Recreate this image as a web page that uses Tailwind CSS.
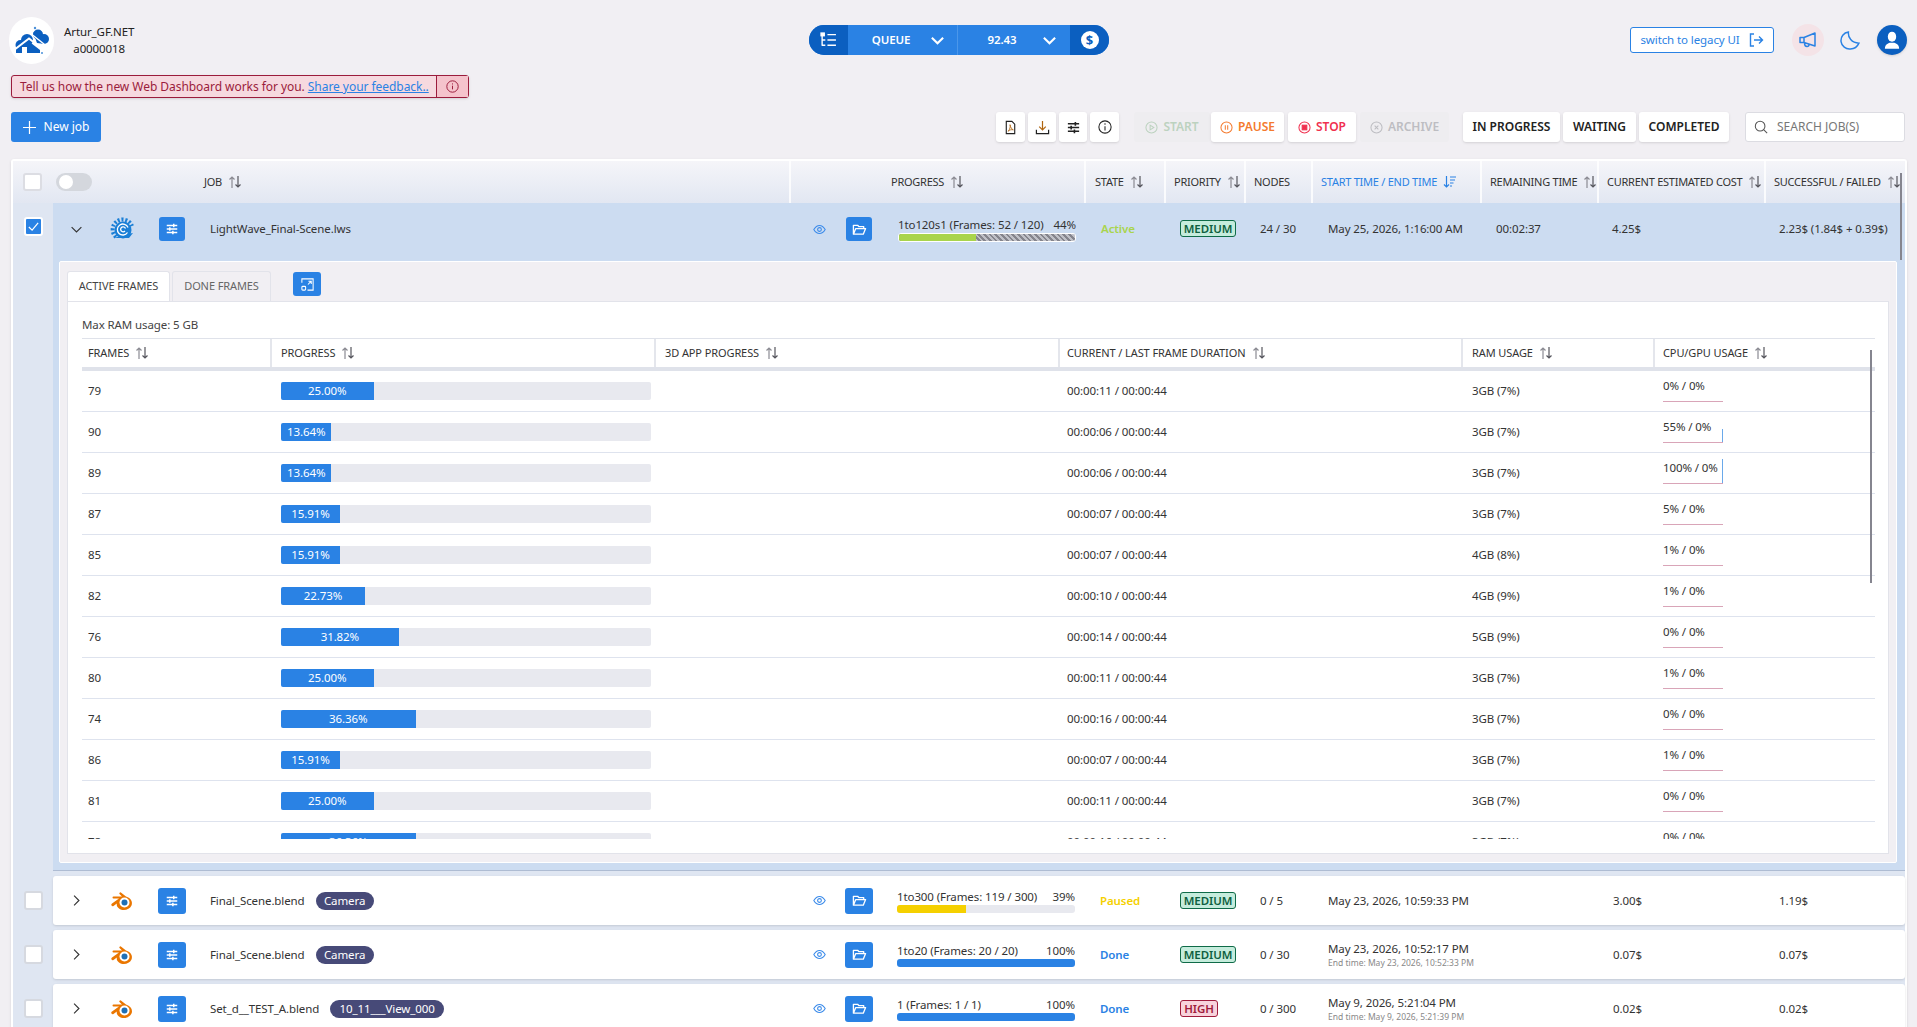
<!DOCTYPE html>
<html lang="en">
<head>
  <meta charset="UTF-8" />
  <title>Web Dashboard</title>
  <script src="https://cdn.jsdelivr.net/npm/@tailwindcss/browser@4"></script>
</head>
<body class="bg-[#f1eff3] font-['Noto_Sans',sans-serif] text-[11.5px] tracking-[-0.1px] text-[#333] h-[1027px] overflow-hidden">
  <!-- shared icons -->
  <svg class="absolute w-0 h-0">
    <symbol id="sort" viewBox="0 0 14 14"><path d="M4 13V2M1.500 4.500 4 2l2.500 2.500" fill="none" stroke="#8b8b93" stroke-width="1.200"/><path d="M10 1v11M7.500 9.500 10 12l2.500-2.500" fill="none" stroke="#55555d" stroke-width="1.200"/></symbol>
    <symbol id="sliders" viewBox="0 0 16 16"><path d="M2 4h12M2 8h12M2 12h12" stroke="currentColor" stroke-width="1.500" fill="none"/><path d="M10 2v4M5.500 6v4M9 10v4" stroke="currentColor" stroke-width="1.700" fill="none"/></symbol>
    <symbol id="folder" viewBox="0 0 16 16"><path d="M1.500 13V3.500h4.500l1.500 1.500h5V7M1.500 13h10.500l2.500-6H4z" fill="none" stroke="currentColor" stroke-width="1.400" stroke-linejoin="round"/></symbol>
    <symbol id="eye" viewBox="0 0 16 16"><path d="M1 8c2-3.400 4.400-5 7-5s5 1.600 7 5c-2 3.400-4.400 5-7 5s-5-1.600-7-5z" fill="none" stroke="currentColor" stroke-width="1.300"/><circle cx="8" cy="8" r="2.300" fill="none" stroke="currentColor" stroke-width="1.300"/></symbol>
    <symbol id="blender" viewBox="0 0 24 24"><path fill="#ea7600" d="M2 14.500 9 9.500H3.500a1 1 0 0 1 0-2H12L9.500 5a1 1 0 0 1 1.400-1.400L16 7.500c5 1.500 7 5.500 5.500 9-2 4.500-8.500 6-12.500 3-2-1.500-2.500-3-2.200-5L3.500 17A1 1 0 0 1 2 14.500z"/><circle cx="14.500" cy="13.500" r="5" fill="#fff"/><circle cx="14.500" cy="13.500" r="3" fill="#1f6fb5"/></symbol>
  </svg>

  <header class="h-[75px] pt-[5px] flex items-center">
    <div class="w-[809px] flex items-center pl-[9px]">
      <div class="w-[45px] h-[47px] rounded-full bg-white">
        <svg viewBox="0 0 45 47" class="w-[45px] h-[47px]" fill="#0b5fc0">
          <circle cx="11.500" cy="28" r="5"/><circle cx="18" cy="23" r="6"/><rect x="7" y="27" width="16" height="9"/>
          <circle cx="29" cy="17.500" r="5"/><circle cx="35" cy="22" r="5"/><path d="M24 15l12 12-8-1z"/>
          <path d="M5 33 20 21.500 36 34" fill="none" stroke="#fff" stroke-width="2"/>
          <path d="M20 24.500 31 33v3H20z"/>
          <path d="M18.500 14 40 31" stroke="#fff" stroke-width="1.500" fill="none"/>
          <rect x="13" y="30" width="5" height="6" fill="#fff"/>
          <circle cx="26" cy="11" r="1.200" fill="#4a90d9"/><circle cx="33" cy="36" r="1" fill="#4a90d9"/>
        </svg>
      </div>
      <div class="ml-[10px] text-center leading-[17px] text-[#222]">
        <div>Artur_GF.NET</div>
        <div>a0000018</div>
      </div>
    </div>

    <div class="w-[300px] h-[30px] rounded-full overflow-hidden flex bg-[#2a82e4] text-white font-semibold">
      <div class="w-[39px] bg-[#0b5fc0] flex items-center justify-center">
        <svg viewBox="0 0 16 16" class="w-[17px] h-[17px]" fill="none" stroke="#fff" stroke-width="1.300"><path d="M2 2v11M2 7.500h3M2 12.500h3M7 2.500h8M7 7.500h8M7 12.500h8"/><rect x="1" y="1" width="3" height="2.500" fill="#fff"/></svg>
      </div>
      <div class="w-[110px] flex items-center border-r border-[#4b97ea]">
        <span class="ml-[18px] w-[50px] text-center">QUEUE</span>
        <svg viewBox="0 0 16 16" class="ml-[14px] w-[15px] h-[15px]" fill="none" stroke="#fff" stroke-width="2.200"><path d="M2 5l6 6 6-6"/></svg>
      </div>
      <div class="w-[112px] flex items-center">
        <span class="ml-[21px] w-[46px] text-center">92.43</span>
        <svg viewBox="0 0 16 16" class="ml-[17px] w-[15px] h-[15px]" fill="none" stroke="#fff" stroke-width="2.200"><path d="M2 5l6 6 6-6"/></svg>
      </div>
      <div class="w-[39px] bg-[#0b5fc0] flex items-center justify-center">
        <span class="w-[18px] h-[18px] rounded-full bg-white text-[#0b5fc0] font-bold text-[13px] leading-[18px] text-center">$</span>
      </div>
    </div>

    <div class="flex-1 flex items-center justify-end pr-[10px]">
      <a class="w-[144px] h-[26px] rounded-[3px] border border-[#2a82e4] bg-white text-[#2a82e4] flex items-center justify-center gap-[8px]">
        <span>switch to legacy UI</span>
        <svg viewBox="0 0 16 16" class="w-[16px] h-[16px]" fill="none" stroke="#2a82e4" stroke-width="1.400"><path d="M6 2H2.500v12H6M6 8h8.500M11 4.500 14.500 8 11 11.500"/></svg>
      </a>
      <div class="ml-[18px] w-[32px] h-[32px] rounded-full bg-[#f4e3e7] flex items-center justify-center">
        <svg viewBox="0 0 20 20" class="w-[20px] h-[20px]" fill="none" stroke="#2a82e4" stroke-width="1.500" stroke-linejoin="round"><path d="M2 7.500h4L17 3v13L6 12.500H2zM6 7.500v5M6.500 13c0 2 1 3.500 2.500 3.500s2-1 2-2"/></svg>
      </div>
      <svg viewBox="0 0 20 20" class="ml-[16px] w-[21px] h-[21px]" fill="none" stroke="#2a82e4" stroke-width="1.400"><path d="M8 2c-.5 5 3 10.500 10 10.500-1.500 3.500-4.500 5.500-8 5.500a8 8 0 0 1-2-16z"/></svg>
      <div class="ml-[16px] w-[30px] h-[30px] rounded-full bg-[#0b5fc0] overflow-hidden shadow flex items-center justify-center">
        <svg viewBox="0 0 20 20" class="w-[22px] h-[22px]" fill="#fff"><ellipse cx="10" cy="7" rx="3.800" ry="4.600"/><path d="M3.500 18c0-3.500 2.500-5 4.500-5.500h4c2 .5 4.500 2 4.500 5.500z"/></svg>
      </div>
    </div>
  </header>

  <div class="ml-[11px] w-[458px] h-[23px] flex rounded-[3px] border border-[#9b1c3c] bg-[#f6d9df] shadow text-[#9b1c3c] text-[12px] tracking-[-0.05px] leading-[21px]">
    <div class="w-[424px] pl-[8px] whitespace-nowrap">Tell us how the new Web Dashboard works for you. <a class="text-[#2a82e4] underline">Share your feedback..</a></div>
    <div class="flex-1 border-l border-[#9b1c3c] bg-[#f5c3cc] flex items-center justify-center">
      <svg viewBox="0 0 16 16" class="w-[13px] h-[13px]" fill="none" stroke="#9b1c3c" stroke-width="1.200"><circle cx="8" cy="8" r="7"/><path d="M8 7v4.500M8 4.200v1.300"/></svg>
    </div>
  </div>

  <div class="mt-[14px] px-[11px] pr-[12px] h-[30px] flex items-stretch text-[12px] tracking-normal">
    <button class="w-[90px] rounded-[3px] bg-[#2a82e4] text-white flex items-center justify-center gap-[8px]">
      <svg viewBox="0 0 14 14" class="w-[13px] h-[13px]" fill="none" stroke="#fff" stroke-width="1.300"><path d="M7 0v14M0 7h14"/></svg>
      New job
    </button>
    <div class="ml-[895px] flex gap-[3px]">
      <button class="w-[29px] rounded-[3px] bg-white shadow flex items-center justify-center">
        <svg viewBox="0 0 16 16" class="w-[15px] h-[15px]" fill="none" stroke="#222" stroke-width="1.200"><path d="M3.500 1.500h6l3 3v10h-9z"/><path d="M5.500 12c2-2 2.500-5 2-7 .5 3 2 5 3.500 5.500-2-.5-4 0-5.500 1.500z" stroke="#b0650f" stroke-width=".9"/></svg>
      </button>
      <button class="w-[28px] rounded-[3px] bg-white shadow flex items-center justify-center">
        <svg viewBox="0 0 16 16" class="w-[15px] h-[15px]" fill="none" stroke="#222" stroke-width="1.300"><path d="M8 1v9M4.500 7 8 10.500 11.500 7" stroke="#b0650f"/><path d="M1.500 10.500v4h13v-4"/></svg>
      </button>
      <button class="w-[28px] rounded-[3px] bg-white shadow flex items-center justify-center text-[#222]">
        <svg class="w-[15px] h-[15px]"><use href="#sliders"/></svg>
      </button>
      <button class="w-[29px] rounded-[3px] bg-white shadow flex items-center justify-center">
        <svg viewBox="0 0 16 16" class="w-[14px] h-[14px]" fill="none" stroke="#222" stroke-width="1.200"><circle cx="8" cy="8" r="7"/><path d="M8 7v5M8 3.800v1.500"/></svg>
      </button>
    </div>
    <div class="ml-[15px] flex font-semibold">
      <button class="w-[76px] rounded-[3px] bg-[#eeedf0] text-[#bcd2bf] flex items-center justify-center gap-[5px]">
        <svg viewBox="0 0 14 14" class="w-[13px] h-[13px]" fill="none" stroke="#bcd2bf" stroke-width="1.100"><circle cx="7" cy="7" r="6"/><path d="M5.500 4.500v5l4-2.500z"/></svg>START
      </button>
      <button class="ml-[1px] w-[73px] rounded-[3px] bg-white shadow text-[#f47a2e] flex items-center justify-center gap-[5px]">
        <svg viewBox="0 0 14 14" class="w-[13px] h-[13px]" fill="none" stroke="#f47a2e" stroke-width="1.100"><circle cx="7" cy="7" r="6"/><path d="M5.700 4.500v5M8.300 4.500v5"/></svg>PAUSE
      </button>
      <button class="ml-[4px] w-[68px] rounded-[3px] bg-white shadow text-[#f0304f] flex items-center justify-center gap-[5px]">
        <svg viewBox="0 0 14 14" class="w-[13px] h-[13px]" fill="none" stroke="#f0304f" stroke-width="1.100"><circle cx="7" cy="7" r="6"/><rect x="4.500" y="4.500" width="5" height="5" fill="#f0304f"/></svg>STOP
      </button>
      <button class="ml-[4px] w-[89px] rounded-[3px] bg-[#eeedf0] text-[#bdbdc2] flex items-center justify-center gap-[5px]">
        <svg viewBox="0 0 14 14" class="w-[13px] h-[13px]" fill="none" stroke="#bdbdc2" stroke-width="1.100"><circle cx="7" cy="7" r="6"/><path d="M5 5l4 4M9 5 5 9"/></svg>ARCHIVE
      </button>
    </div>
    <div class="ml-[14px] flex gap-[3px] font-semibold text-[#222]">
      <button class="w-[97px] rounded-[3px] bg-white shadow">IN PROGRESS</button>
      <button class="w-[73px] rounded-[3px] bg-white shadow">WAITING</button>
      <button class="w-[90px] rounded-[3px] bg-white shadow">COMPLETED</button>
    </div>
    <div class="ml-[16px] w-[160px] rounded-[3px] border border-[#dcdce2] bg-white flex items-center pl-[8px] gap-[9px] text-[#777]">
      <svg viewBox="0 0 16 16" class="w-[14px] h-[14px]" fill="none" stroke="#555" stroke-width="1.200"><circle cx="7" cy="7" r="5.500"/><path d="M11 11l4 4"/></svg>
      SEARCH JOB(S)
    </div>
  </div>

  <main class="mt-[17px] ml-[11px] w-[1896px] rounded-t-[3px] border-x-2 border-t-2 border-white bg-[#dfe6f2] shadow">
    <!-- table head -->
    <div class="flex h-[42px] bg-gradient-to-b from-[#f5f5f9] to-[#e2e7f2] text-[#333] uppercase text-[11px] tracking-[-0.25px]">
      <div class="w-[40px] shrink-0 flex items-center pl-[10px]"><span class="w-[19px] h-[18px] rounded-[3px] bg-white border-2 border-[#dcdde3]"></span></div>
      <div class="grid grid-cols-[736px_295px_80px_80px_67px_169px_117px_167px_141px] flex-1">
        <div class="flex items-center pl-[3px]">
          <span class="w-[36px] h-[18px] rounded-full bg-[#d4d7dd] flex items-center pl-[3px]"><span class="w-[14px] h-[14px] rounded-full bg-white"></span></span>
          <span class="ml-[112px]">Job</span><svg class="ml-[6px] w-[14px] h-[14px] shrink-0"><use href="#sort"/></svg>
        </div>
        <div class="border-l-2 border-white/80 flex items-center pl-[100px]">Progress<svg class="ml-[6px] w-[14px] h-[14px] shrink-0"><use href="#sort"/></svg></div>
        <div class="border-l-2 border-white/80 flex items-center pl-[9px]">State<svg class="ml-[6px] w-[14px] h-[14px] shrink-0"><use href="#sort"/></svg></div>
        <div class="border-l-2 border-white/80 flex items-center pl-[8px]">Priority<svg class="ml-[6px] w-[14px] h-[14px] shrink-0"><use href="#sort"/></svg></div>
        <div class="border-l-2 border-white/80 flex items-center pl-[8px]">Nodes</div>
        <div class="border-l-2 border-white/80 flex items-center pl-[8px] text-[#2a82e4]">Start time / End time
          <svg viewBox="0 0 14 14" class="ml-[6px] w-[14px] h-[14px] shrink-0" fill="none" stroke="#2a82e4" stroke-width="1.200"><path d="M3.500 1v11M1 9.500 3.500 12 6 9.500M7 2h6M7 5h5M7 8h3.500M7 11h2"/></svg>
        </div>
        <div class="border-l-2 border-white/80 flex items-center pl-[8px] whitespace-nowrap">Remaining time<svg class="ml-[6px] w-[14px] h-[14px] shrink-0"><use href="#sort"/></svg></div>
        <div class="border-l-2 border-white/80 flex items-center pl-[8px] whitespace-nowrap">Current estimated cost<svg class="ml-[6px] w-[14px] h-[14px] shrink-0"><use href="#sort"/></svg></div>
        <div class="border-l-2 border-white/80 flex items-center pl-[8px] whitespace-nowrap">Successful / Failed<svg class="ml-[6px] w-[14px] h-[14px] shrink-0"><use href="#sort"/></svg></div>
      </div>
    </div>

    <!-- expanded job -->
    <div class="flex">
      <div class="w-[40px] shrink-0 pt-[14px] pl-[11px]">
        <span class="w-[19px] h-[19px] rounded-[3px] border-2 border-white bg-[#2a82e4] flex items-center justify-center">
          <svg viewBox="0 0 14 14" class="w-[13px] h-[13px]" fill="none" stroke="#fff" stroke-width="1.300"><path d="M2 7.500 5.500 11 12 3"/></svg>
        </span>
      </div>
      <div class="flex-1 bg-[#ccdcf1] border-b border-[#aebcd3] h-[668px]">
        <div class="grid grid-cols-[736px_295px_80px_80px_67px_169px_117px_167px_141px] h-[58px] pb-[6px] items-center">
          <div class="flex items-center">
            <svg viewBox="0 0 16 16" class="ml-[17px] w-[13px] h-[13px]" fill="none" stroke="#333" stroke-width="1.400"><path d="M2 5l6 6 6-6"/></svg>
            <svg viewBox="0 0 24 24" class="ml-[27px] w-[24px] h-[24px]">
              <path d="M6 20A10 10 0 1 1 22 9" fill="none" stroke="#1a7fd6" stroke-width="4" stroke-dasharray="2 1.800"/>
              <circle cx="13" cy="13" r="8.500" fill="#1a7fd6"/>
              <path d="M4 21h15l4-5-6 1z" fill="#1a7fd6"/>
              <path d="M17.500 15.500a5.500 5.500 0 1 1 .5-5M15 14a2.500 2.500 0 1 1 .5-2.500" fill="none" stroke="#fff" stroke-width="1.300"/>
            </svg>
            <span class="ml-[25px] w-[26px] h-[24px] rounded-[3px] bg-[#2a82e4] text-white flex items-center justify-center"><svg class="w-[14px] h-[14px]"><use href="#sliders"/></svg></span>
            <span class="ml-[25px]">LightWave_Final-Scene.lws</span>
          </div>
          <div class="flex items-center">
            <svg class="ml-[24px] w-[13px] h-[13px] text-[#3b8bea]"><use href="#eye"/></svg>
            <span class="ml-[20px] w-[26px] h-[24px] rounded-[3px] bg-[#2a82e4] text-white flex items-center justify-center"><svg class="w-[15px] h-[15px]"><use href="#folder"/></svg></span>
            <div class="ml-[26px] w-[178px]">
              <div class="flex justify-between leading-[16px]"><span>1to120s1 (Frames: 52 / 120)</span><span>44%</span></div>
              <div class="h-[9px] rounded-[3px] border border-white bg-[repeating-linear-gradient(45deg,#85858d_0_2px,#bfc0c7_2px_4px)] overflow-hidden"><div class="h-full w-[44%] bg-[#a9d44c]"></div></div>
            </div>
          </div>
          <div class="pl-[17px] font-semibold text-[#a9d44c]">Active</div>
          <div class="pl-[16px]"><span class="inline-block w-[56px] h-[17px] rounded-[3px] border border-[#0f6b48] bg-[#c5ecdc] text-[#0f5f40] font-semibold leading-[15px] text-center">MEDIUM</span></div>
          <div class="pl-[16px]">24 / 30</div>
          <div class="pl-[17px]">May 25, 2026, 1:16:00 AM</div>
          <div class="pl-[16px]">00:02:37</div>
          <div class="pl-[15px]">4.25$</div>
          <div class="pl-[15px] whitespace-nowrap">2.23$ (1.84$ + 0.39$)</div>
        </div>

        <div class="ml-[6px] mr-[8px] h-[602px] rounded-[2px] border border-white bg-[#f1eff3] px-[7px] pt-[9px]">
          <div class="flex h-[30px] items-start text-[11px]">
            <div class="w-[103px] h-[30px] rounded-t-[3px] border border-b-0 border-[#e2e3ea] bg-white flex items-center justify-center text-[#444]">ACTIVE FRAMES</div>
            <div class="ml-[2px] w-[99px] h-[30px] rounded-t-[3px] border border-b-0 border-[#e2e3ea] flex items-center justify-center text-[#666]">DONE FRAMES</div>
            <span class="ml-[22px] mt-[1px] w-[28px] h-[24px] rounded-[3px] bg-[#2a82e4] flex items-center justify-center">
              <svg viewBox="0 0 16 16" class="w-[15px] h-[15px]" fill="none" stroke="#fff" stroke-width="1.100"><path d="M2 6V2h12v12H8M8.500 8 12 4.500M9 4.500h3v3"/><rect x="2" y="10" width="4" height="4" rx="1"/></svg>
            </span>
          </div>
          <div class="h-[553px] border border-[#e2e3ea] bg-white pl-[14px]">
            <div class="h-[36px] flex items-center pt-[10px] text-[#444]">Max RAM usage: 5 GB</div>
            <div class="relative w-[1793px]">
              <div class="grid grid-cols-[188px_384px_404px_403px_192px_222px] h-[33px] border-t border-b-4 border-[#dfe2ea] uppercase text-[11px] text-[#333]">
                <div class="flex items-center pl-[6px]">Frames<svg class="ml-[6px] w-[14px] h-[14px] shrink-0"><use href="#sort"/></svg></div>
                <div class="flex items-center pl-[9px] border-l-2 border-[#e4e6ec]">Progress<svg class="ml-[6px] w-[14px] h-[14px] shrink-0"><use href="#sort"/></svg></div>
                <div class="flex items-center pl-[9px] border-l-2 border-[#e4e6ec]">3D app progress<svg class="ml-[6px] w-[14px] h-[14px] shrink-0"><use href="#sort"/></svg></div>
                <div class="flex items-center pl-[7px] border-l-2 border-[#e4e6ec]">Current / Last frame duration<svg class="ml-[6px] w-[14px] h-[14px] shrink-0"><use href="#sort"/></svg></div>
                <div class="flex items-center pl-[9px] border-l-2 border-[#e4e6ec]">RAM usage<svg class="ml-[6px] w-[14px] h-[14px] shrink-0"><use href="#sort"/></svg></div>
                <div class="flex items-center pl-[8px] border-l-2 border-[#e4e6ec]">CPU/GPU usage<svg class="ml-[6px] w-[14px] h-[14px] shrink-0"><use href="#sort"/></svg></div>
              </div>
              <div id="frames" class="h-[468px] overflow-hidden"></div>
              <div class="absolute right-[3px] top-[12px] bottom-[256px] w-[2px] bg-[#85858f]"></div>
            </div>
          </div>
        </div>
      </div>
    </div>

    <div id="jobs"></div>
    <div class="absolute left-[1900px] top-[173px] w-[2px] h-[87px] bg-[#85858f]"></div>
  </main>

  <script>
    const frames = [
      [79, 25, '25.00%', '00:00:11', '3GB (7%)', '0% / 0%', 0],
      [90, 13.64, '13.64%', '00:00:06', '3GB (7%)', '55% / 0%', 13],
      [89, 13.64, '13.64%', '00:00:06', '3GB (7%)', '100% / 0%', 24],
      [87, 15.91, '15.91%', '00:00:07', '3GB (7%)', '5% / 0%', 0],
      [85, 15.91, '15.91%', '00:00:07', '4GB (8%)', '1% / 0%', 0],
      [82, 22.73, '22.73%', '00:00:10', '4GB (9%)', '1% / 0%', 0],
      [76, 31.82, '31.82%', '00:00:14', '5GB (9%)', '0% / 0%', 0],
      [80, 25, '25.00%', '00:00:11', '3GB (7%)', '1% / 0%', 0],
      [74, 36.36, '36.36%', '00:00:16', '3GB (7%)', '0% / 0%', 0],
      [86, 15.91, '15.91%', '00:00:07', '3GB (7%)', '1% / 0%', 0],
      [81, 25, '25.00%', '00:00:11', '3GB (7%)', '0% / 0%', 0],
      [78, 36.36, '36.36%', '00:00:16', '3GB (7%)', '0% / 0%', 0],
    ];

    document.getElementById('frames').innerHTML = frames.map((f) => `
      <div class="grid grid-cols-[188px_384px_404px_403px_192px_222px] h-[41px] border-b border-[#dee3ee] items-center">
        <div class="pl-[6px]">${f[0]}</div>
        <div class="pl-[11px]">
          <div class="w-[370px] h-[18px] rounded-[2px] bg-[#e8e9ef] overflow-hidden">
            <div class="h-full bg-[#2a82e4] text-white text-center leading-[18px]" style="width:${f[1]}%">${f[2]}</div>
          </div>
        </div>
        <div></div>
        <div class="pl-[9px]">${f[3]} / 00:00:44</div>
        <div class="pl-[11px]">${f[4]}</div>
        <div class="pl-[10px] self-start pt-[6px]">
          <div class="relative w-[60px] h-[25px] pt-[1px] border-b border-[#d9a5b8] leading-[16px] whitespace-nowrap">
            ${f[5]}
            <div class="absolute right-0 bottom-0 w-[1px] bg-[#6aa9ea]" style="height:${f[6]}px"></div>
          </div>
        </div>
      </div>`).join('');

    const medium = '<span class="inline-block w-[56px] h-[17px] rounded-[3px] border border-[#0f6b48] bg-[#c5ecdc] text-[#0f5f40] font-semibold leading-[15px] text-center">MEDIUM</span>';
    const high = '<span class="inline-block w-[38px] h-[17px] rounded-[3px] border border-[#a01c3c] bg-[#f8d3dc] text-[#a01c3c] font-semibold leading-[15px] text-center">HIGH</span>';
    const jobs = [
      { name: 'Final_Scene.blend', tag: 'Camera', tagW: 'w-[58px]', tagM: 'ml-[11px]', range: '1to300 (Frames: 119 / 300)', pct: 39, bar: 'bg-[#f5d000]', state: 'Paused', color: 'text-[#f5d000]', pri: medium, nodes: '0 / 5', start: 'May 23, 2026, 10:59:33 PM', end: '', cost: '3.00$', done: '1.19$' },
      { name: 'Final_Scene.blend', tag: 'Camera', tagW: 'w-[58px]', tagM: 'ml-[11px]', range: '1to20 (Frames: 20 / 20)', pct: 100, bar: 'bg-[#2a82e4]', state: 'Done', color: 'text-[#2a82e4]', pri: medium, nodes: '0 / 30', start: 'May 23, 2026, 10:52:17 PM', end: 'End time: May 23, 2026, 10:52:33 PM', cost: '0.07$', done: '0.07$' },
      { name: 'Set_d__TEST_A.blend', tag: '10_11___View_000', tagW: 'w-[114px]', tagM: 'ml-[11px]', range: '1 (Frames: 1 / 1)', pct: 100, bar: 'bg-[#2a82e4]', state: 'Done', color: 'text-[#2a82e4]', pri: high, nodes: '0 / 300', start: 'May 9, 2026, 5:21:04 PM', end: 'End time: May 9, 2026, 5:21:39 PM', cost: '0.02$', done: '0.02$' },
    ];

    document.getElementById('jobs').innerHTML = jobs.map((j) => `
      <div class="flex mt-[5px]">
        <div class="w-[40px] shrink-0 flex items-center pl-[11px]"><span class="w-[19px] h-[19px] rounded-[3px] bg-white border-2 border-[#d6d9e0]"></span></div>
        <div class="flex-1 h-[49px] rounded-[3px] bg-white shadow grid grid-cols-[736px_295px_80px_80px_67px_169px_117px_167px_141px] items-center">
          <div class="flex items-center">
            <svg viewBox="0 0 16 16" class="ml-[17px] w-[13px] h-[13px]" fill="none" stroke="#333" stroke-width="1.400"><path d="M5 2l6 6-6 6"/></svg>
            <svg class="ml-[27px] w-[24px] h-[24px]"><use href="#blender"/></svg>
            <span class="ml-[24px] w-[28px] h-[26px] rounded-[3px] bg-[#2a82e4] text-white flex items-center justify-center"><svg class="w-[14px] h-[14px]"><use href="#sliders"/></svg></span>
            <span class="ml-[24px]">${j.name}</span>
            <span class="${j.tagM} ${j.tagW} h-[18px] rounded-full bg-[#474a78] text-white text-center leading-[18px]">${j.tag}</span>
          </div>
          <div class="flex items-center">
            <svg class="ml-[24px] w-[13px] h-[13px] text-[#3b8bea]"><use href="#eye"/></svg>
            <span class="ml-[19px] w-[28px] h-[26px] rounded-[3px] bg-[#2a82e4] text-white flex items-center justify-center"><svg class="w-[15px] h-[15px]"><use href="#folder"/></svg></span>
            <div class="ml-[24px] w-[178px]">
              <div class="flex justify-between leading-[16px]"><span>${j.range}</span><span>${j.pct}%</span></div>
              <div class="h-[8px] rounded-[3px] bg-[#e8e9ef] overflow-hidden"><div class="h-full ${j.bar}" style="width:${j.pct}%"></div></div>
            </div>
          </div>
          <div class="pl-[16px] font-semibold ${j.color}">${j.state}</div>
          <div class="pl-[16px]">${j.pri}</div>
          <div class="pl-[16px]">${j.nodes}</div>
          <div class="pl-[17px] whitespace-nowrap">
            <div class="leading-[16px]">${j.start}</div>
            ${j.end ? `<div class="text-[8.500px] tracking-normal leading-[12px] text-[#888]">${j.end}</div>` : ''}
          </div>
          <div></div>
          <div class="pl-[16px]">${j.cost}</div>
          <div class="pl-[15px]">${j.done}</div>
        </div>
      </div>`).join('');
  </script>
</body>
</html>
